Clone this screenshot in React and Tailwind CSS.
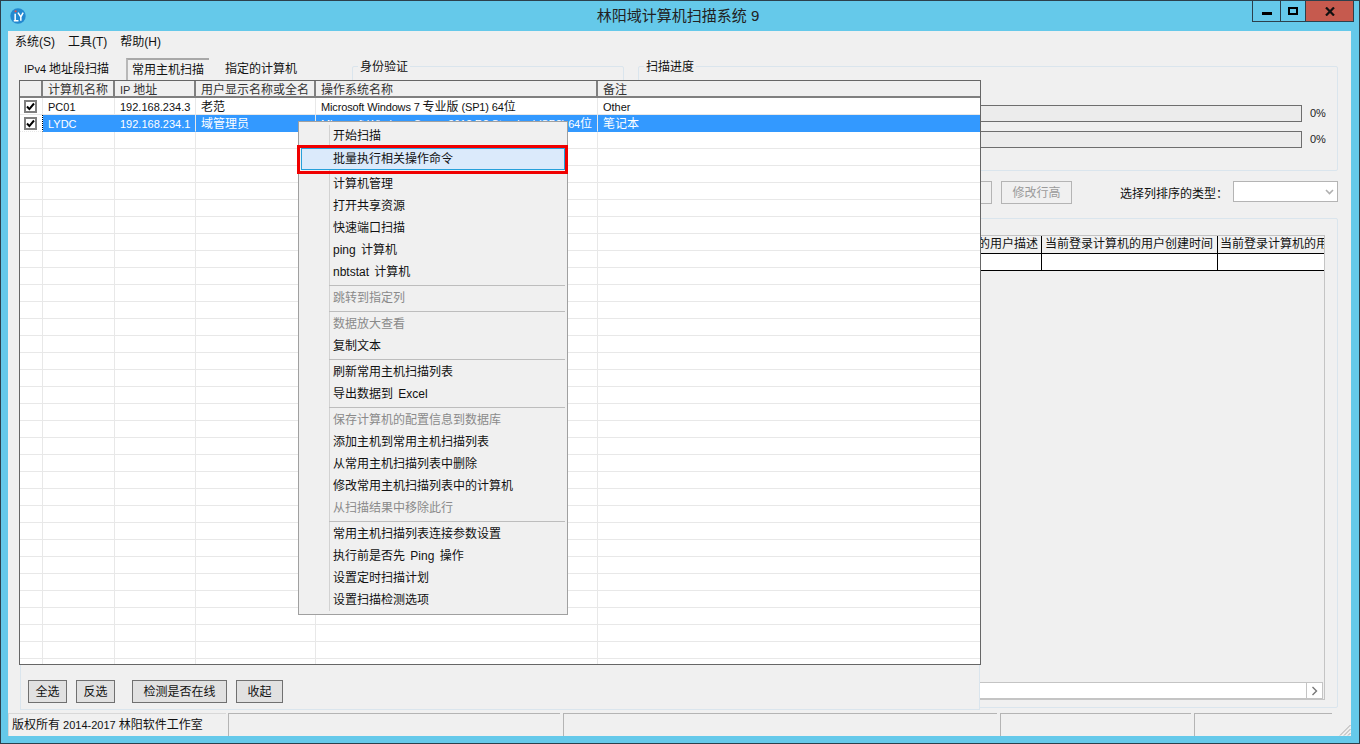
import React from 'react';

const rows = [
  { name: 'PC01', ip: '192.168.234.3', user: '老范', os: 'Microsoft Windows 7 专业版 (SP1) 64位', note: 'Other' },
  { name: 'LYDC', ip: '192.168.234.1', user: '域管理员', os: 'Microsoft Windows Server 2012 R2 Standard (SP2) 64位', note: '笔记本', selected: true },
];

// sep = separator line, off = disabled item, hot = highlighted item
const menuItems = [
  { label: '开始扫描' },
  { gap: 'h-px' },
  { label: '批量执行相关操作命令', hot: true },
  { gap: 'h-[3px]' },
  { label: '计算机管理' },
  { label: '打开共享资源' },
  { label: '快速端口扫描' },
  { label: 'ping 计算机' },
  { label: 'nbtstat 计算机' },
  { sep: true },
  { label: '跳转到指定列', off: true },
  { sep: true },
  { label: '数据放大查看', off: true },
  { label: '复制文本' },
  { sep: true },
  { label: '刷新常用主机扫描列表' },
  { label: '导出数据到 Excel' },
  { sep: true },
  { label: '保存计算机的配置信息到数据库', off: true },
  { label: '添加主机到常用主机扫描列表' },
  { label: '从常用主机扫描列表中删除' },
  { label: '修改常用主机扫描列表中的计算机' },
  { label: '从扫描结果中移除此行', off: true },
  { sep: true },
  { label: '常用主机扫描列表连接参数设置' },
  { label: '执行前是否先 Ping 操作' },
  { label: '设置定时扫描计划' },
  { label: '设置扫描检测选项' },
];

const gridCols = 'grid grid-cols-[23px_72px_81px_120px_282px_1fr]';

// latin runs are a bit narrower than the CJK text
const Txt = ({ text, tight }) =>
  text.split(/([\x00-\x7f]+)/).map((part, i) =>
    /^[\x00-\x7f]+$/.test(part) ? (
      <span key={i} className={tight ? 'text-[11px] tracking-[-0.15px]' : 'text-[11px]'}>{part}</span>
    ) : (
      <span key={i}>{part}</span>
    )
  );

const Logo = () => (
  <svg width="16" height="16" viewBox="0 0 17 17" className="ml-[9px] shrink-0 -mt-px">
    <circle cx="8.5" cy="8.5" r="8.2" fill="#2389d0" />
    <circle cx="6" cy="3.5" r="1.2" fill="#e2504a" />
    <path d="M5.5 6v7M4 13.5h5" stroke="#fff" strokeWidth="1.6" fill="none" />
    <path d="M8.5 5l3 4.5v4M14 5l-2.5 4.5" stroke="#fff" strokeWidth="1.6" fill="none" />
  </svg>
);

const Check = () => (
  <div className="w-[13px] h-[13px] border-2 border-[#7f7f7f] bg-white flex items-center justify-center">
    <svg width="9" height="9" viewBox="0 0 9 9">
      <path d="M1 4.5l2.4 2.6L8 1.5" stroke="#000" strokeWidth="2" fill="none" />
    </svg>
  </div>
);

const GroupBox = ({ title, className, children }) => (
  <div className={`relative border border-[#dae5ed] rounded-[2px] ${className}`}>
    {title && (
      <span className="absolute -top-[8px] left-[5px] px-[2px] bg-[#f0f0f0] leading-[16px]">{title}</span>
    )}
    {children}
  </div>
);

const Bar = () => (
  <div className="flex items-center">
    <div className="flex-1 h-[17px] border border-[#6e6e6e] bg-[#ececec]" />
    <span className="w-[35px] pl-[8px] text-[11px] text-[#222]">0%</span>
  </div>
);

const Btn = ({ children, className }) => (
  <button className={`h-[23px] border border-[#707070] bg-[#e1e1e1] text-[#111] ${className}`}>{children}</button>
);

const StatusCell = ({ className, children }) => (
  <div className={`h-full border-t border-l border-[#b4b4b4] pl-[3px] leading-[23px] whitespace-nowrap ${className}`}>
    {children}
  </div>
);

const App = () => {
  const blanks = Array.from({ length: 33 });

  return (
    <div className="relative w-[1360px] h-[744px] flex flex-col bg-[#65c9ea] border border-[#2c404c] overflow-hidden text-[12px] text-[#111] font-['Liberation_Sans','Noto_Sans_CJK_SC',sans-serif]">
      {/* title bar */}
      <div className="relative h-[30px] shrink-0 flex items-center">
        <Logo />
        <div className="flex-1 text-center text-[15px] leading-[30px] text-[#222] pl-[78px]">林阳域计算机扫描系统 9</div>
        <div className="flex self-start h-[21px] mr-[5px] border border-t-0 border-[#2c404c]">
          <div className="w-[28px] border-r border-[#2c404c] flex items-center justify-center">
            <div className="w-[10px] h-[3px] mt-[5px] bg-black" />
          </div>
          <div className="w-[25px] border-r border-[#2c404c] flex items-center justify-center">
            <div className="w-[10px] h-[8px] border-2 border-black" />
          </div>
          <div className="w-[47px] bg-[#c65a4e] flex items-center justify-center">
            <svg width="10" height="9" viewBox="0 0 10 9">
              <path d="M1 0.5l8 8M9 0.5l-8 8" stroke="#111" strokeWidth="2.2" fill="none" />
            </svg>
          </div>
        </div>
      </div>

      {/* client area */}
      <div className="flex-1 min-h-0 flex flex-col ml-[7px] mr-[8px] mb-[7px] bg-[#f0f0f0]">
        <div className="h-[21px] shrink-0 flex items-center pl-[7px] pt-[1px]">
          <span className="mr-[13px]">系统(S)</span>
          <span className="mr-[13px]">工具(T)</span>
          <span>帮助(H)</span>
        </div>

        <div className="relative flex-1 min-h-0 flex flex-col ml-[344px] mr-[13px] pt-[14px] pb-[5px]">
          {/* top groups */}
          <div className="flex gap-[14px] h-[105px] shrink-0">
            <GroupBox title="身份验证" className="w-[272px] h-[60px]" />
            <GroupBox title="扫描进度" className="flex-1 pt-[38px] pl-[8px] flex flex-col gap-[9px]">
              <Bar />
              <Bar />
            </GroupBox>
          </div>

          {/* sort row */}
          <div className="flex items-center h-[23px] mt-[10px] shrink-0">
            <button className="w-[60px] ml-[580px] h-[23px] border border-[#b4b4b4]" />
            <button className="w-[71px] h-[23px] ml-[9px] border border-[#b4b4b4] text-[#9a9a9a]">修改行高</button>
            <span className="ml-[48px] mt-[3px] text-[#111] whitespace-nowrap">选择列排序的类型：</span>
            <div className="ml-[5px] flex-1 h-[21px] -mt-[2px] border border-[#b4b4b4] bg-white flex items-center justify-end pr-[3px]">
              <svg width="9" height="6" viewBox="0 0 9 6">
                <path d="M1 1l3.5 3.5L8 1" stroke="#b0b0b0" strokeWidth="1.6" fill="none" />
              </svg>
            </div>
          </div>

          {/* result group */}
          <GroupBox className="flex-1 min-h-0 mt-[14px] pt-[16px] pr-[12px] pb-[7px] pl-[8px]">
            <div className="h-full flex flex-col border border-[#c4c4c4] border-l-0 overflow-hidden">
              <div className="grid grid-cols-[1fr_176px_106px] whitespace-nowrap">
                <div className="h-[18px] border-b border-r border-black text-right pr-[3px] leading-[17px] overflow-hidden">当前登录计算机的用户描述</div>
                <div className="h-[18px] border-b border-r border-black pl-[3px] leading-[17px] overflow-hidden">当前登录计算机的用户创建时间</div>
                <div className="h-[18px] border-b border-black pl-[2px] leading-[17px] overflow-hidden">当前登录计算机的用户创建</div>
                <div className="h-[17px] border-b border-r border-black bg-white" />
                <div className="h-[17px] border-b border-r border-black bg-white" />
                <div className="h-[17px] border-b border-black bg-white" />
              </div>
              <div className="mt-auto mr-px h-[17px] flex border-t border-b border-r border-[#c4c4c4] bg-white">
                <div className="flex-1" />
                <div className="w-[16px] border-l border-[#c4c4c4] flex items-center justify-center">
                  <svg width="7" height="10" viewBox="0 0 7 10">
                    <path d="M1.5 1l4 4-4 4" stroke="#777" strokeWidth="1.4" fill="none" />
                  </svg>
                </div>
              </div>
            </div>
          </GroupBox>
        </div>

        {/* status bar */}
        <div className="relative h-[23px] shrink-0 flex items-stretch">
          <StatusCell className="w-[218px] border-t-[#d8d8d8] border-l-[#d8d8d8]"><Txt text="版权所有 2014-2017 林阳软件工作室" /></StatusCell>
          <StatusCell className="w-[332px] ml-[2px]" />
          <StatusCell className="w-[434px] ml-[3px]" />
          <StatusCell className="w-[191px] ml-[3px]" />
          <StatusCell className="w-[138px] ml-[3px]" />
          <svg width="12" height="12" viewBox="0 0 12 12" className="absolute right-0 bottom-0">
            <path d="M1 11.5L11.5 1M5 11.5L11.5 5M9 11.5l2.5-2.5" stroke="#a8a8a8" strokeWidth="1" fill="none" />
          </svg>
        </div>
      </div>

      {/* host list tabs, lies over the right hand panels */}
      <div className="absolute left-[18px] top-[57px] w-[962px] flex flex-col">
        <div className="h-[22px] flex pl-[5px] whitespace-nowrap">
          <span className="mt-[2px] leading-[18px] w-[102px]"><Txt text="IPv4 地址段扫描" /></span>
          <span className="w-[83px] h-[22px] border-2 border-b-0 border-[#b8b8b8] border-t-[#a8a8a8] border-r-0 bg-[#f0f0f0] pl-[4px] pt-[1px] leading-[19px]">常用主机扫描</span>
          <span className="ml-[16px] mt-[2px] leading-[18px]">指定的计算机</span>
        </div>
        <div className="mx-px h-[630px] flex flex-col border border-t-0 border-[#dae5ed] bg-[#f0f0f0]">
          <div className="-mx-[2px] h-[585px] shrink-0 border border-[#666] bg-white overflow-hidden">
            <div className={`${gridCols} grid-rows-[15px] h-[17px] bg-[#f0f0f0] border-b-2 border-[#808080] text-[#333] whitespace-nowrap leading-[18px]`}>
              <div className="border-r-2 border-[#808080]" />
              <div className="border-r-2 border-[#808080] pl-[5px]">计算机名称</div>
              <div className="border-r-2 border-[#808080] pl-[5px]"><Txt text="IP 地址" /></div>
              <div className="border-r-2 border-[#808080] pl-[5px]">用户显示名称或全名</div>
              <div className="border-r-2 border-[#808080] pl-[5px]">操作系统名称</div>
              <div className="pl-[5px]">备注</div>
            </div>
            {rows.map((r) => {
              const tone = r.selected ? 'bg-[#3399ff] text-white border-[#3399ff]' : 'border-[#e8e8e8] text-[#111]';
              return (
                <div key={r.name} className={`${gridCols} grid-rows-[17px] h-[17px] whitespace-nowrap leading-[18px]`}>
                  <div className={`flex items-center pl-[4px] border-b border-r border-[#e8e8e8] ${r.selected ? 'border-r-black border-dotted' : ''}`}>
                    <Check />
                  </div>
                  <div className={`border-b border-r pl-[5px] ${tone}`}><Txt text={r.name} /></div>
                  <div className={`border-b border-r border-r-[#e8e8e8] pl-[5px] ${tone}`}><Txt text={r.ip} /></div>
                  <div className={`border-b border-r border-r-[#e8e8e8] pl-[5px] ${tone}`}>{r.user}</div>
                  <div className={`border-b border-r border-r-[#e8e8e8] pl-[5px] ${tone}`}><Txt text={r.os} tight /></div>
                  <div className={`border-b pl-[5px] ${tone}`}><Txt text={r.note} /></div>
                </div>
              );
            })}
            {blanks.map((_, i) => (
              <div key={i} className={`${gridCols} h-[17px]`}>
                <div className="border-b border-r border-[#e8e8e8]" />
                <div className="border-b border-r border-[#e8e8e8]" />
                <div className="border-b border-r border-[#e8e8e8]" />
                <div className="border-b border-r border-[#e8e8e8]" />
                <div className="border-b border-r border-[#e8e8e8]" />
                <div className="border-b border-[#e8e8e8]" />
              </div>
            ))}
          </div>
          <div className="flex mt-[15px] pl-[7px]">
            <Btn className="w-[39px]">全选</Btn>
            <Btn className="w-[39px] ml-[9px]">反选</Btn>
            <Btn className="w-[95px] ml-[17px]">检测是否在线</Btn>
            <Btn className="w-[47px] ml-[9px]">收起</Btn>
          </div>
        </div>
      </div>

      {/* context menu */}
      <div className="absolute left-[297px] top-[120px] w-[270px] py-[3px] px-[2px] border border-[#a0a0a0] bg-[#f0f0f0] text-[#111] [word-spacing:2px]">
        <div className="absolute left-[30px] top-[3px] bottom-[3px] w-px bg-[#d2d2d2]" />
        {menuItems.map((m, i) => {
          if (m.gap) return <div key={i} className={m.gap} />;
          if (m.sep) {
            return (
              <div key={i} className="relative h-[4px] ml-[28px] flex items-center">
                <div className="w-full h-px bg-[#bdbdbd]" />
              </div>
            );
          }
          if (m.hot) {
            return (
              <div key={i} className="relative h-[22px] pl-[31px] leading-[20px] border border-[#26a0da] bg-[#dbeafb]">
                {m.label}
                <div className="absolute -left-[5px] -right-[4px] -top-[4px] -bottom-[5px] border-[3px] border-[#f00000]" />
              </div>
            );
          }
          return (
            <div key={i} className={`relative h-[22px] pl-[32px] leading-[22px] ${m.off ? 'text-[#8a8a8a]' : ''}`}>
              {m.label}
            </div>
          );
        })}
      </div>
    </div>
  );
};

export default App;
